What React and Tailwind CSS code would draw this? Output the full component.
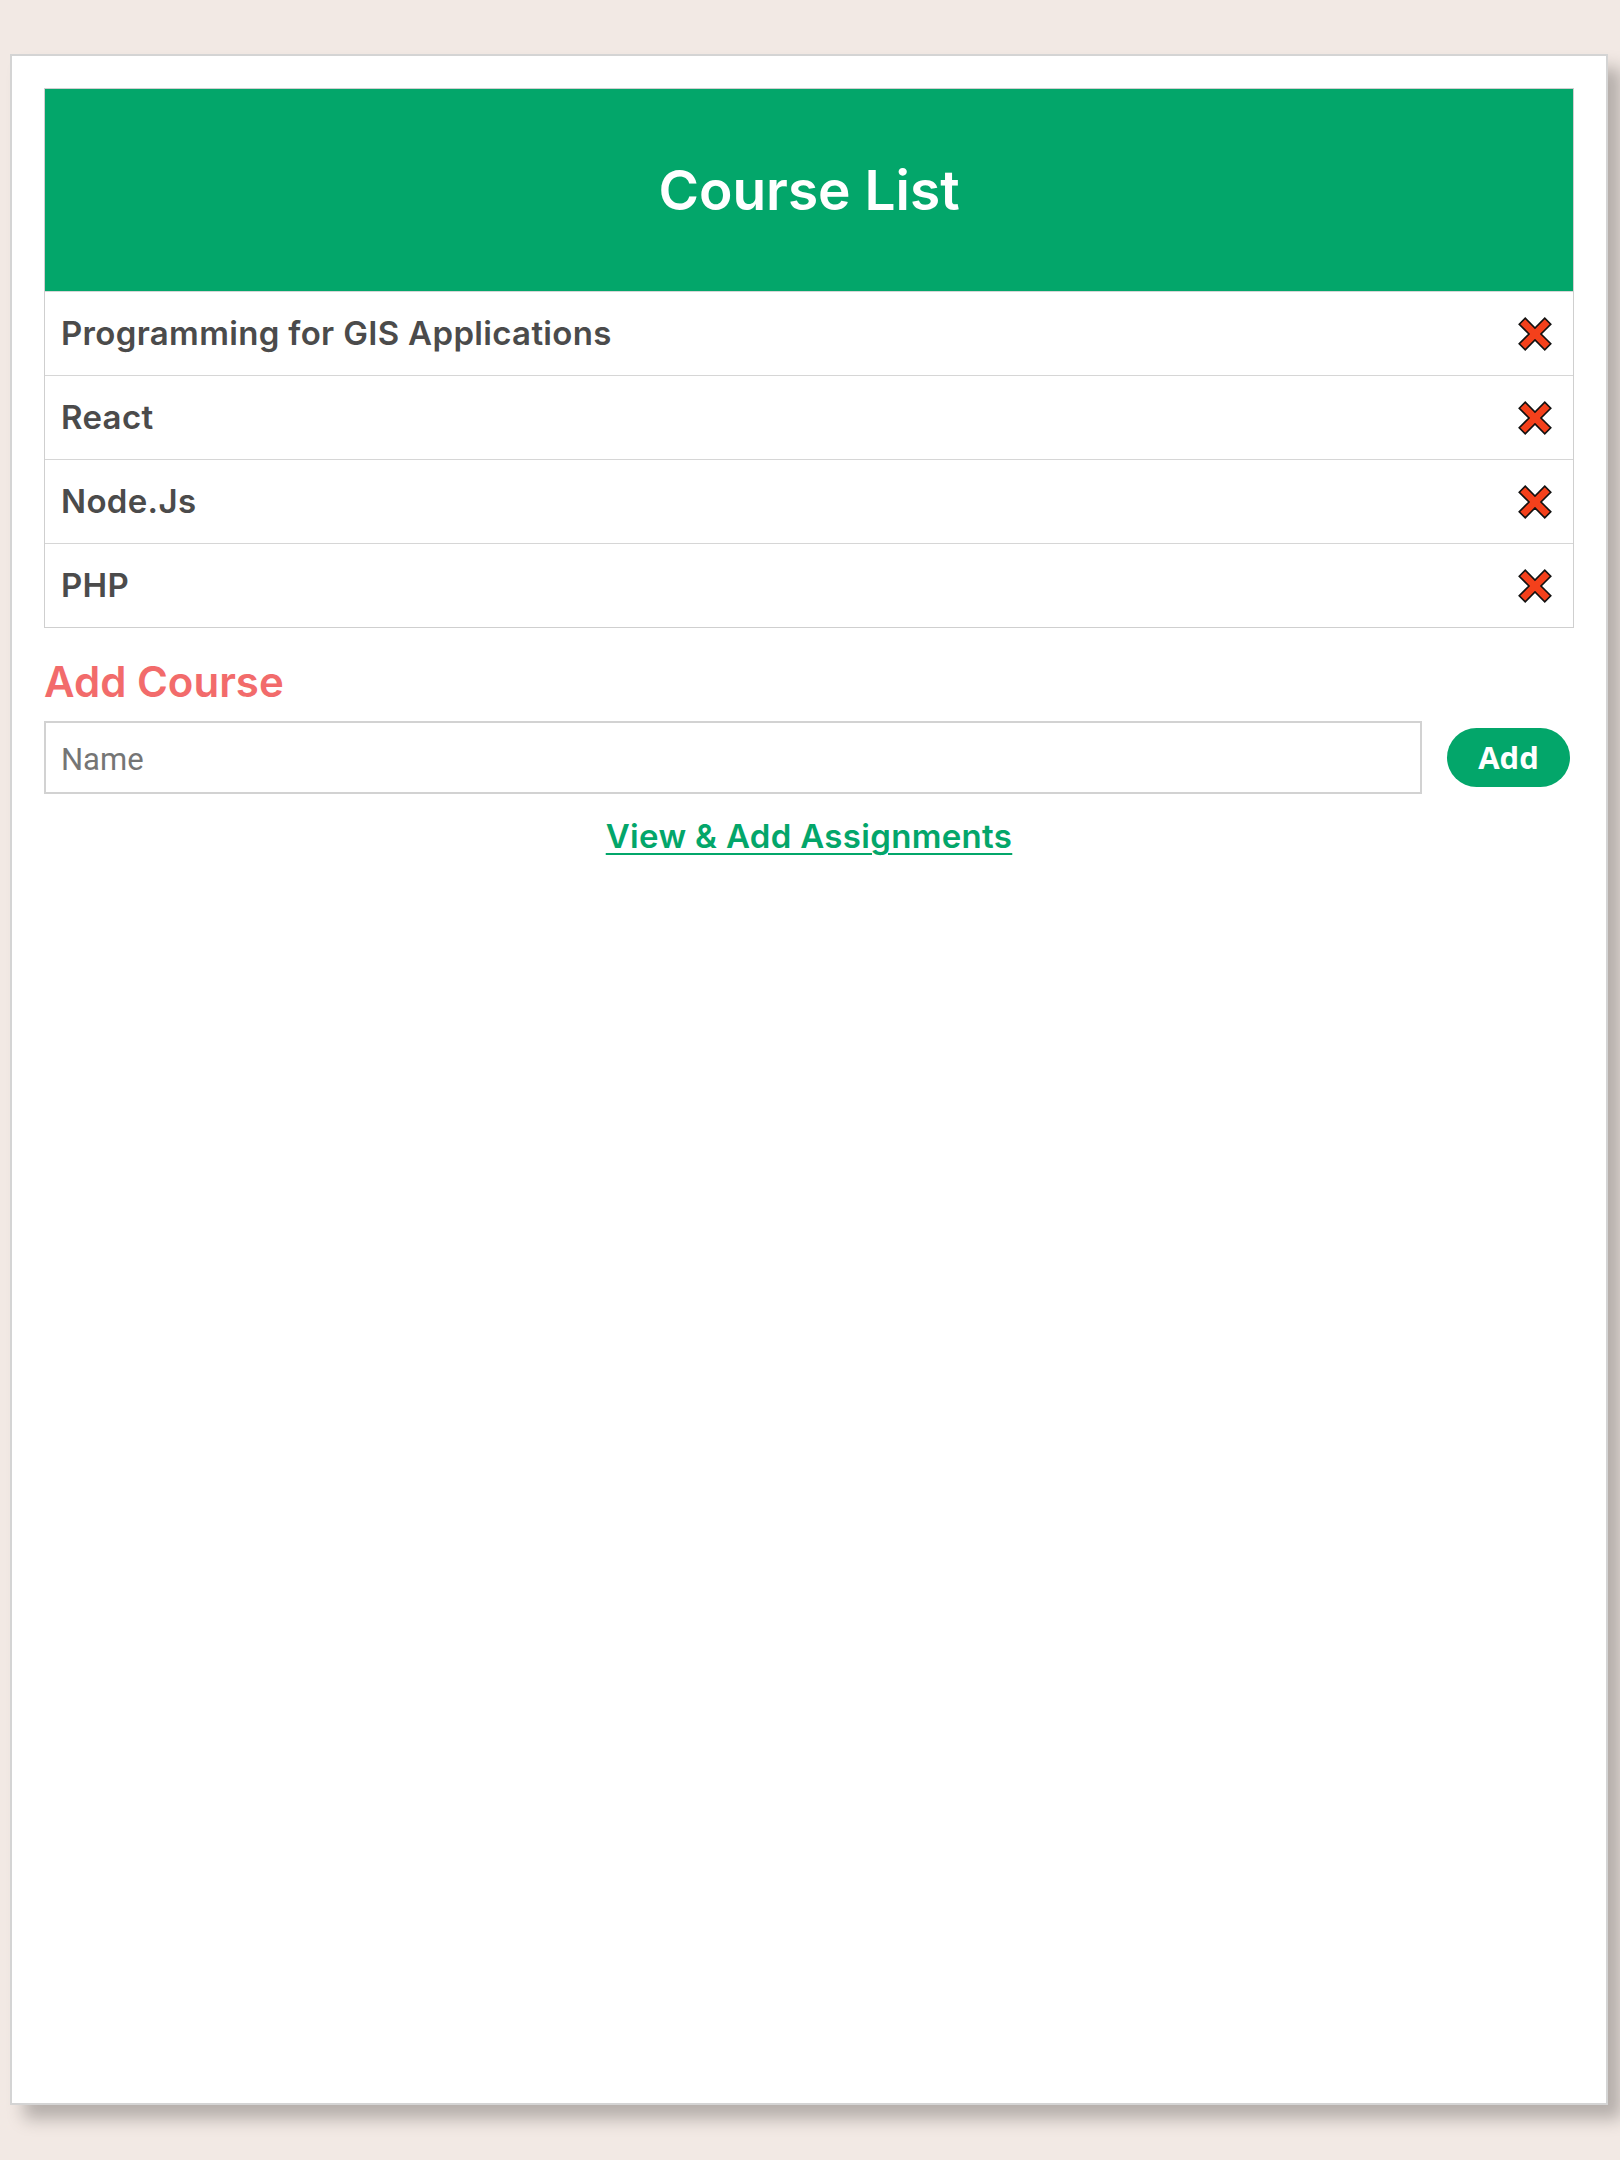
import { useState } from 'react';

const CloseIcon = () => (
  <svg width="36" height="36" viewBox="0 0 24 24" aria-hidden="true">
    <path
      d="M1.5 5.5 L5.5 1.5 L12 8 L18.5 1.5 L22.5 5.5 L16 12 L22.5 18.5 L18.5 22.5 L12 16 L5.5 22.5 L1.5 18.5 L8 12 Z"
      fill="#f4401b"
      stroke="#111"
      strokeWidth="1.1"
      strokeLinejoin="miter"
    />
  </svg>
);

const App = () => {
  const [courses, setCourses] = useState([
    'Programming for GIS Applications',
    'React',
    'Node.Js',
    'PHP',
  ]);
  const [name, setName] = useState('');

  const addCourse = () => {
    if (!name.trim()) return;
    setCourses([...courses, name.trim()]);
    setName('');
  };

  const removeCourse = (idx) => {
    setCourses(courses.filter((_, i) => i !== idx));
  };

  return (
    <div className="min-h-[2160px] bg-[#f2e9e4] pt-[54px] pl-[10px] font-['Inter',sans-serif]">
      <div className="w-[1598px] h-[2051px] bg-white border-2 border-[#d4d4d4] p-8 shadow-[14px_14px_16px_rgba(0,0,0,0.25)]">
        {/* Course table */}
        <div className="border border-[#cfcfcf]">
          <div className="h-[202px] bg-[#03a66a] flex items-center justify-center">
            <h1 className="text-white text-[55px] font-semibold">Course List</h1>
          </div>
          {courses.map((course, idx) => (
            <div
              key={idx}
              className="h-[84px] flex items-center justify-between pl-4 pr-[20px] border-t border-[#d6d6d6] first:border-t-0"
            >
              <span className="text-[33px] font-semibold tracking-[0.01em] text-[#4b4b4b]">{course}</span>
              <button onClick={() => removeCourse(idx)} className="cursor-pointer">
                <CloseIcon />
              </button>
            </div>
          ))}
        </div>

        {/* Add form */}
        <h2 className="mt-[30px] text-[42px] leading-[48px] font-semibold text-[#f26b6b]">Add Course</h2>
        <div className="mt-[15px] flex items-center gap-[25px]">
          <input
            value={name}
            onChange={(e) => setName(e.target.value)}
            placeholder="Name"
            className="w-[1378px] h-[73px] border-2 border-[#d2d2d2] px-[15px] pt-[3px] text-[31px] font-['Roboto',sans-serif] text-[#333] placeholder:text-[#757575] outline-none"
          />
          <button
            onClick={addCourse}
            className="w-[123px] h-[59px] rounded-full bg-[#03a66a] text-white text-[31px] font-bold font-['Open_Sans',sans-serif]"
          >
            Add
          </button>
        </div>
        <div className="mt-[18px] text-center">
          <a
            href="#"
            className="text-[33px] font-semibold tracking-[0.01em] text-[#03a66a] underline decoration-2 underline-offset-[5px]"
          >
            View &amp; Add Assignments
          </a>
        </div>
      </div>
    </div>
  );
};

export default App;
